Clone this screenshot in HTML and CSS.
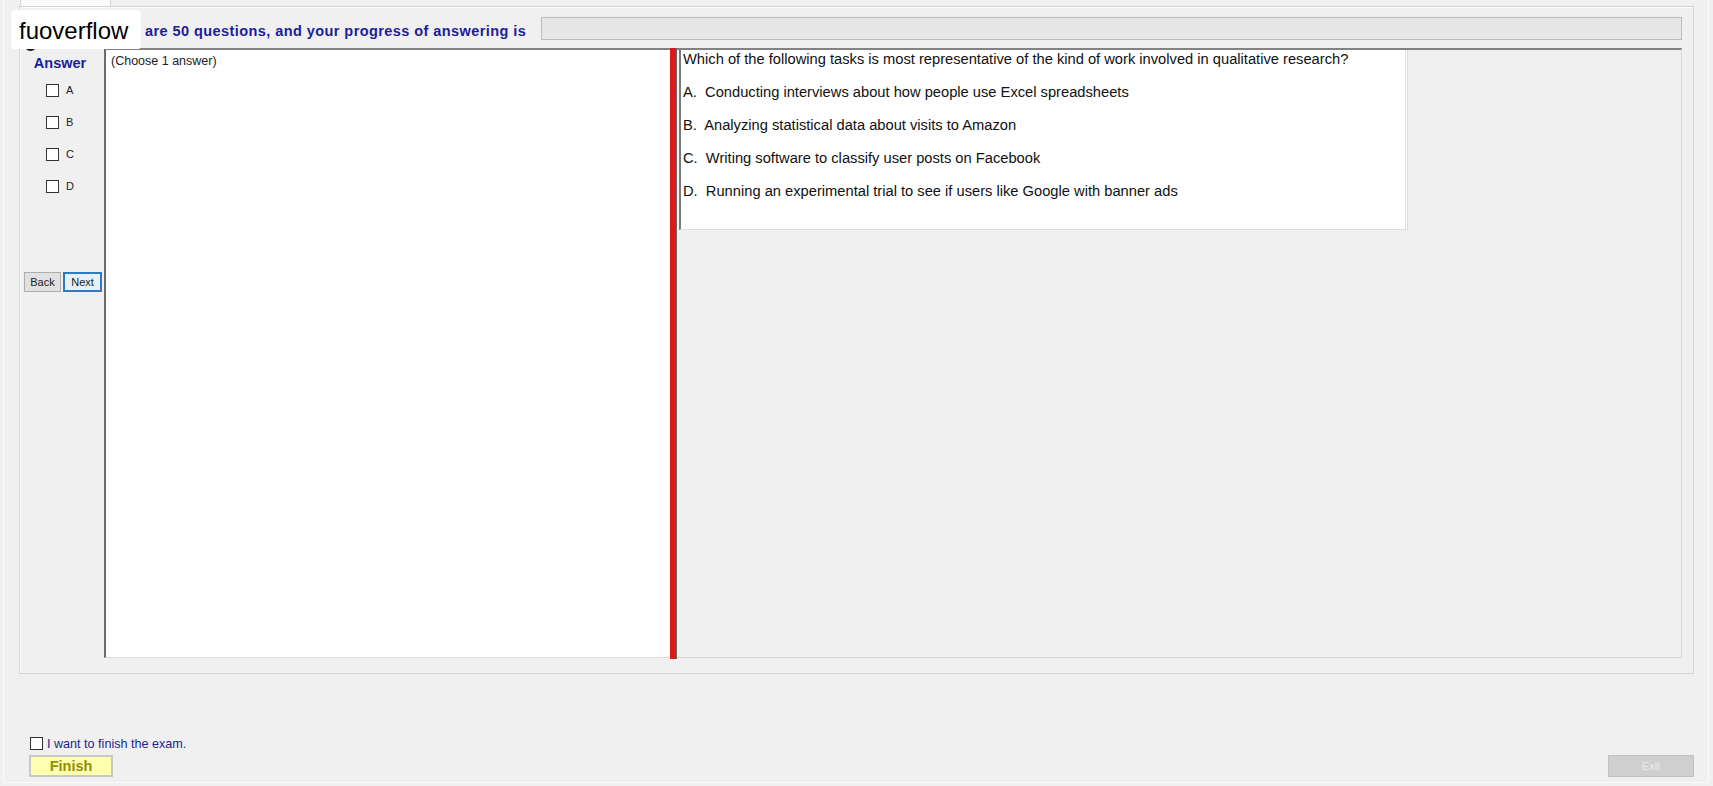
FILE: index.html
```html
<!DOCTYPE html>
<html>
  <head>
    <meta charset="utf-8" />
    <link rel="stylesheet" href="styles.css">
    <title>Exam</title>
  </head>
  <body>
    <div class="window">
      <div class="tabstrip"><div class="tab"></div></div>

      <div class="group">
        <!-- header: count of questions and progress -->
        <div class="header">
          <span class="dot"></span>
          <span class="count">are 50 questions, and your progress of answering is</span>
          <div class="progress"></div>
        </div>

        <div class="content">
          <div class="side">
            <div class="side-title">Answer</div>
            <div class="choices">
              <label class="choice"><span class="box"></span>A</label>
              <label class="choice"><span class="box"></span>B</label>
              <label class="choice"><span class="box"></span>C</label>
              <label class="choice"><span class="box"></span>D</label>
            </div>
            <div class="nav">
              <button type="button" class="navButton">Back</button>
              <button type="button" class="navButton current">Next</button>
            </div>
          </div>

          <div class="answer-pane">(Choose 1 answer)</div>
          <div class="splitter"></div>

          <div class="question-area">
            <div class="question">
              <p class="question-text">Which of the following tasks is most representative of the kind of work involved in qualitative research?</p>
              <p class="option">A.  Conducting interviews about how people use Excel spreadsheets</p>
              <p class="option">B.  Analyzing statistical data about visits to Amazon</p>
              <p class="option">C.  Writing software to classify user posts on Facebook</p>
              <p class="option">D.  Running an experimental trial to see if users like Google with banner ads</p>
            </div>
          </div>
        </div>
      </div>

      <div class="footer">
        <label class="finish-check"><span class="box"></span>I want to finish the exam.</label>
        <div class="footer-buttons">
          <button type="button" class="finishButton">Finish</button>
          <button type="button" class="exitButton">Exit</button>
        </div>
      </div>

      <div class="brand">fuoverflow</div>
    </div>
  </body>
</html>
```

FILE: styles.css
```css
body {
  margin: 0;
  width: 1713px;
  height: 786px;
  overflow: hidden;
  background-color: #f0f0f0;
  font-family: "Liberation Sans", Arial, sans-serif;
}

.window {
  position: relative;
  margin-left: 3px;
  width: 1706px;
  height: 783px;
  box-sizing: border-box;
  border-left: 1px solid #fbfbfb;
  border-right: 1px solid #fbfbfb;
  border-bottom: 1px solid #fbfbfb;
}

.tabstrip {
  height: 6px;
  padding-left: 16px;
}

.tab {
  width: 91px;
  height: 6px;
  box-sizing: border-box;
  background-color: #fbfbfb;
  border-left: 1px solid #d5d5d5;
  border-right: 1px solid #d5d5d5;
}

.group {
  margin-left: 15px;
  width: 1675px;
  height: 668px;
  box-sizing: border-box;
  border: 1px solid #d5d5d5;
  box-shadow: inset 1px 1px 0 #fcfcfc;
}

.header {
  display: flex;
  align-items: flex-start;
  height: 41px;
}

.dot {
  width: 13px;
  height: 13px;
  margin-top: 31px;
  margin-left: 4px;
  border-radius: 50%;
  background-color: #1a1a1a;
}

.count {
  margin-top: 16px;
  margin-left: 108px;
  color: #1d1d9c;
  font-size: 14.5px;
  line-height: 17px;
  letter-spacing: 0.43px;
  font-weight: bold;
}

.progress {
  flex: 1;
  height: 23px;
  margin-top: 10px;
  margin-left: 15px;
  margin-right: 11px;
  box-sizing: border-box;
  background-color: #e6e6e6;
  border: 1px solid #bcbcbc;
}

.content {
  display: flex;
  height: 610px;
  margin-right: 11px;
}

.side {
  width: 84px;
  padding-left: 4px;
  box-sizing: border-box;
}

.side-title {
  margin-top: 7px;
  padding-right: 8px;
  text-align: center;
  color: #1d1d9c;
  font-size: 14.5px;
  line-height: 17px;
  font-weight: bold;
}

.choices {
  margin-top: 2px;
}

.choice {
  display: flex;
  align-items: center;
  height: 32px;
  padding-left: 22px;
  font-size: 11px;
  color: #222;
}

.box {
  width: 13px;
  height: 13px;
  box-sizing: border-box;
  margin-right: 7px;
  background-color: #fff;
  border: 1px solid #333;
}

.nav {
  display: flex;
  gap: 2px;
  margin-top: 70px;
}

.navButton {
  width: 37px;
  height: 20px;
  padding: 0;
  box-sizing: border-box;
  background-color: #e1e1e1;
  border: 1px solid #adadad;
  font-family: "Liberation Sans", Arial, sans-serif;
  font-size: 11px;
  color: #222;
}

.navButton.current {
  width: 39px;
  border: 2px solid #2f7bc0;
  background-color: #e5f1fb;
}

.answer-pane {
  width: 566px;
  box-sizing: border-box;
  padding: 4px 0 0 5px;
  background-color: #fff;
  border-left: 2px solid #6b6b6b;
  border-top: 2px solid #828282;
  border-bottom: 1px solid #dcdcdc;
  font-size: 12.5px;
  line-height: 15px;
  color: #222;
}

.splitter {
  width: 6px;
  height: 611px;
  background-color: #dd1a1a;
  border-right: 1px solid #6a6a6a;
}

.question-area {
  flex: 1;
  padding-left: 2px;
  background-color: #f0f0f0;
  border-top: 2px solid #828282;
  border-right: 1px solid #d8d8d8;
  border-bottom: 1px solid #d8d8d8;
}

.question {
  width: 729px;
  height: 180px;
  box-sizing: border-box;
  padding: 1px 0 0 2px;
  background-color: #fff;
  border-left: 2px solid #7a7a7a;
  border-right: 3px double #dedede;
  border-bottom: 1px solid #dedede;
  color: #111;
  font-size: 14.7px;
  line-height: 17px;
}

.question p {
  margin: 0;
  white-space: pre;
}

.option {
  margin-top: 16px !important;
}

.footer {
  padding: 63px 14px 0 26px;
}

.finish-check {
  display: flex;
  align-items: center;
  height: 13px;
  color: #1e1e8a;
  font-size: 12.6px;
}

.finish-check .box {
  width: 13px;
  margin-right: 4px;
}

.footer-buttons {
  display: flex;
  justify-content: space-between;
  margin-top: 5px;
}

.finishButton {
  width: 84px;
  height: 22px;
  margin-left: -1px;
  background-color: #ffffb0;
  border: 2px solid #c8c8c8;
  color: #8f8f00;
  font-family: "Liberation Sans", Arial, sans-serif;
  font-size: 14.5px;
  font-weight: bold;
}

.exitButton {
  width: 86px;
  height: 22px;
  background-color: #cfcfcf;
  border: 1px solid #c2c2c2;
  color: #ececec;
  font-family: "Liberation Sans", Arial, sans-serif;
  font-size: 11px;
}

/* watermark on top of the header */
.brand {
  position: absolute;
  left: 7px;
  top: 10px;
  width: 130px;
  height: 39px;
  box-sizing: border-box;
  padding-left: 8px;
  background-color: #fff;
  border-radius: 3px;
  color: #000;
  font-size: 24px;
  line-height: 42px;
  overflow: hidden;
}
```
